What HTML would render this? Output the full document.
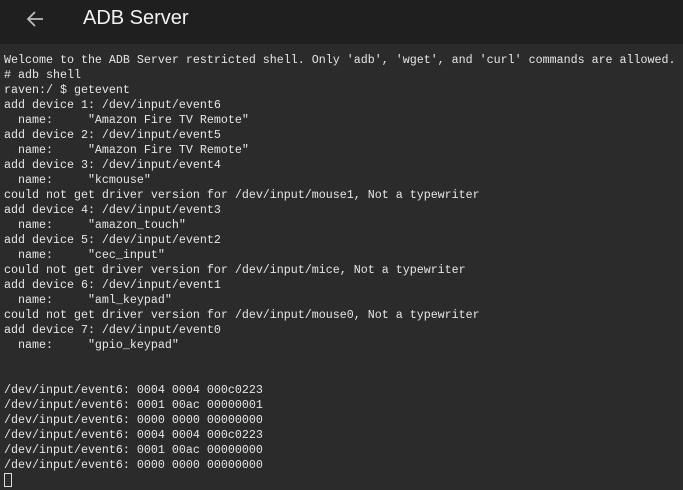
<!DOCTYPE html>
<html><head><style>
html,body{margin:0;padding:0;width:683px;height:490px;overflow:hidden;background:#2b2b2b}
.hdr{height:44px;background:#1f1f1f;position:relative}
.hdr .t{position:absolute;left:83px;top:5px;font:20px "Liberation Sans",sans-serif;color:#f2f2f2;line-height:26px}
.hdr svg{position:absolute;left:25px;top:9px}
pre{margin:0;position:absolute;left:4px;top:53px;font:11.67px/15px "Liberation Mono",monospace;color:#e6e6e6;white-space:pre}
.cur{display:inline-block;width:6px;height:12px;border:1px solid #ddd;vertical-align:-2px}
</style></head><body>
<div class="hdr"><svg width="20" height="20" viewBox="0 0 20 20"><path d="M18 10H3M10 3L3 10l7 7" stroke="#bbb" stroke-width="1.8" fill="none"/></svg><div class="t">ADB Server</div></div>
<pre>Welcome to the ADB Server restricted shell. Only 'adb', 'wget', and 'curl' commands are allowed.
# adb shell
raven:/ $ getevent
add device 1: /dev/input/event6
  name:     "Amazon Fire TV Remote"
add device 2: /dev/input/event5
  name:     "Amazon Fire TV Remote"
add device 3: /dev/input/event4
  name:     "kcmouse"
could not get driver version for /dev/input/mouse1, Not a typewriter
add device 4: /dev/input/event3
  name:     "amazon_touch"
add device 5: /dev/input/event2
  name:     "cec_input"
could not get driver version for /dev/input/mice, Not a typewriter
add device 6: /dev/input/event1
  name:     "aml_keypad"
could not get driver version for /dev/input/mouse0, Not a typewriter
add device 7: /dev/input/event0
  name:     "gpio_keypad"


/dev/input/event6: 0004 0004 000c0223
/dev/input/event6: 0001 00ac 00000001
/dev/input/event6: 0000 0000 00000000
/dev/input/event6: 0004 0004 000c0223
/dev/input/event6: 0001 00ac 00000000
/dev/input/event6: 0000 0000 00000000
<span class="cur"></span></pre>
</body></html>
